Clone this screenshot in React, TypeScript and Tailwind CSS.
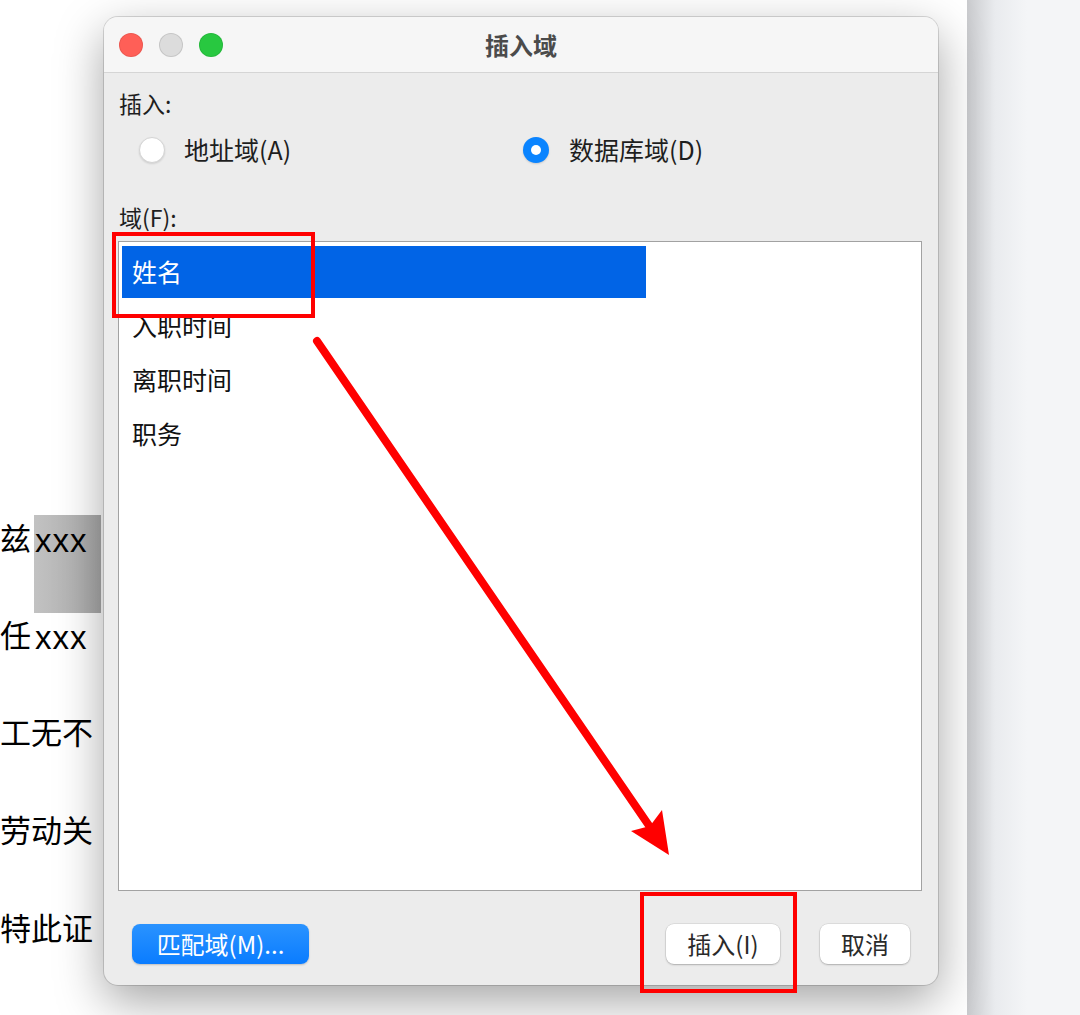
import React from 'react';

const ui = { fontFamily: '"Noto Sans CJK SC", "Noto Sans", sans-serif' };
const doc = { fontFamily: '"Liberation Serif", "Noto Sans CJK SC", serif' };
const latin = { fontFamily: '"Liberation Sans", "Noto Sans CJK SC", sans-serif' };

const fields = ['姓名', '入职时间', '离职时间', '职务'];

function DocumentLines() {
  return (
    <div className="flex flex-col pt-[492px] text-[31px] text-black" style={doc}>
      <div className="flex h-[97px] items-center whitespace-nowrap">
        <span>兹</span>
        <span
          className="ml-[3px] mt-[23px] h-[98px] w-[67px] self-start bg-[linear-gradient(to_right,#c2c2c2,#aaaaaa)] pl-[1px] pt-[8px] text-[33px] leading-[36px] tracking-[1px]"
          style={latin}
        >
          xxx
        </span>
      </div>
      <div className="flex h-[97px] items-center whitespace-nowrap">
        <span>任</span>
        <span className="ml-[4px] text-[33px] tracking-[1px]" style={latin}>
          xxx
        </span>
      </div>
      <div className="flex h-[97px] items-center whitespace-nowrap">
        <span>工无不</span>
      </div>
      <div className="flex h-[98px] items-center whitespace-nowrap">
        <span>劳动关</span>
      </div>
      <div className="flex h-[99px] items-center whitespace-nowrap">
        <span>特此证</span>
      </div>
    </div>
  );
}

function Radio({ checked }: { checked?: boolean }) {
  if (checked) {
    return (
      <span className="flex h-[26px] w-[26px] items-center justify-center rounded-full bg-[#0a84ff] shadow-[0_1px_2px_rgba(0,0,0,0.15)]">
        <span className="h-[10px] w-[10px] rounded-full bg-white" />
      </span>
    );
  }
  return (
    <span className="h-[26px] w-[26px] rounded-full border border-[#d4d4d4] bg-white shadow-[0_1px_2px_rgba(0,0,0,0.12)]" />
  );
}

function Dialog() {
  return (
    <div
      className="absolute left-[104px] top-[17px] flex h-[968px] w-[834px] flex-col rounded-[14px] bg-[#ececec] shadow-[0_0_0_1px_rgba(0,0,0,0.14),0_16px_48px_rgba(0,0,0,0.36)]"
      style={ui}
    >
      <div className="grid h-[56px] grid-cols-[1fr_auto_1fr] items-center rounded-t-[14px] border-b border-[#d5d5d5] bg-[#f6f6f6]">
        <div className="flex gap-[16px] pl-[15px]">
          <span className="h-[24px] w-[24px] rounded-full bg-[#ff5f57] shadow-[inset_0_0_0_1px_rgba(0,0,0,0.08)]" />
          <span className="h-[24px] w-[24px] rounded-full bg-[#dcdcdc] shadow-[inset_0_0_0_1px_rgba(0,0,0,0.1)]" />
          <span className="h-[24px] w-[24px] rounded-full bg-[#28c840] shadow-[inset_0_0_0_1px_rgba(0,0,0,0.08)]" />
        </div>
        <div className="text-[24px] font-bold text-[#4b4b4b]">插入域</div>
        <div />
      </div>

      <div className="flex flex-col px-[14px] text-[#1e1e1e]">
        <div className="mt-[16px] h-[28px] pl-[1px] text-[23px] leading-[28px]">插入:</div>
        <div className="mt-[17px] flex h-[32px] items-center">
          <div className="ml-[21px] flex w-[384px] items-center gap-[19px]">
            <Radio />
            <span className="text-[25px]">地址域(A)</span>
          </div>
          <div className="flex items-center gap-[20px]">
            <Radio checked />
            <span className="text-[25px]">数据库域(D)</span>
          </div>
        </div>
        <div className="mt-[37px] h-[28px] pl-[1px] text-[23px] leading-[28px]">域(F):</div>
        <div className="mt-[10px] flex h-[650px] w-[804px] flex-col border border-[#a2a2a2] bg-white pl-[3px] pt-[4px]">
          {fields.map((f, i) => (
            <div
              key={f}
              className={
                i === 0
                  ? 'mb-[2px] flex h-[52px] w-[524px] items-center bg-[#0164e6] pl-[10px] text-[25px] text-white'
                  : 'mb-[2px] flex h-[52px] w-[524px] items-center pl-[10px] text-[25px] text-[#111]'
              }
            >
              {f}
            </div>
          ))}
        </div>
        <div className="mt-[33px] flex items-center justify-between pl-[14px] pr-[14px]">
          <button className="flex h-[40px] w-[177px] items-center justify-center rounded-[8px] bg-[linear-gradient(to_bottom,#2a93ff,#0a7cff)] text-[24px] text-white shadow-[0_1px_2px_rgba(0,0,0,0.2)]">
            匹配域(M)...
          </button>
          <div className="flex gap-[40px]">
            <button className="flex h-[40px] w-[114px] items-center justify-center rounded-[8px] bg-white text-[24px] text-[#2a2a2a] shadow-[0_0_0_0.5px_rgba(0,0,0,0.12),0_1px_2px_rgba(0,0,0,0.22)]">
              插入(I)
            </button>
            <button className="flex h-[40px] w-[90px] items-center justify-center rounded-[8px] bg-white text-[24px] text-[#2a2a2a] shadow-[0_0_0_0.5px_rgba(0,0,0,0.12),0_1px_2px_rgba(0,0,0,0.22)]">
              取消
            </button>
          </div>
        </div>
      </div>
    </div>
  );
}

function Annotations() {
  return (
    <>
      <div className="absolute left-[112px] top-[232px] h-[86px] w-[203px] border-[4px] border-[#ff0000]" />
      <div className="absolute left-[640px] top-[892px] h-[101px] w-[157px] border-[4px] border-[#ff0000]" />
      <svg className="absolute left-0 top-0" width="1080" height="1015" viewBox="0 0 1080 1015">
        <line x1="317" y1="341" x2="652" y2="830" stroke="#ff0000" strokeWidth="8" strokeLinecap="round" />
        <polygon points="669,855 631,831 650,826 662,810" fill="#ff0000" />
      </svg>
    </>
  );
}

export default function App() {
  return (
    <div className="relative flex h-[1015px] w-[1080px] overflow-hidden bg-white">
      <div className="w-[967px] bg-white">
        <DocumentLines />
      </div>
      <div className="flex-1 bg-[linear-gradient(to_right,#c9cacd,#e9ebee_28px,#f4f5f7_60px)]" />
      <Dialog />
      <Annotations />
    </div>
  );
}
